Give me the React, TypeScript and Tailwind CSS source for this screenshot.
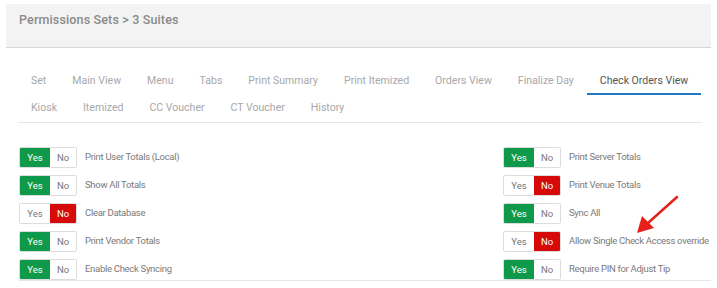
import React from "react";

const row1 = ["Set", "Main View", "Menu", "Tabs", "Print Summary", "Print Itemized", "Orders View", "Finalize Day", "Check Orders View"];
const row2 = ["Kiosk", "Itemized", "CC Voucher", "CT Voucher", "History"];

const left: [string, boolean][] = [
  ["Print User Totals (Local)", true],
  ["Show All Totals", true],
  ["Clear Database", false],
  ["Print Vendor Totals", true],
  ["Enable Check Syncing", true],
];
const right: [string, boolean][] = [
  ["Print Server Totals", true],
  ["Print Venue Totals", false],
  ["Sync All", true],
  ["Allow Single Check Access override", false],
  ["Require PIN for Adjust Tip", true],
];

function Toggle({ yes }: { yes: boolean }) {
  return (
    <div className="flex h-[21px] w-[58px] shrink-0 rounded-[2px] border border-[#dcdcdc] overflow-hidden text-[9.5px] leading-none">
      <div className={"flex w-[30px] items-center justify-center " + (yes ? "bg-[#0e9a4a] text-white" : "bg-white text-[#777]")}>Yes</div>
      <div className={"flex flex-1 items-center justify-center " + (!yes ? "bg-[#d60a0a] text-white" : "bg-white text-[#777]")}>No</div>
    </div>
  );
}

function Row({ label, yes }: { label: string; yes: boolean }) {
  return (
    <div className="flex h-[21px] items-center">
      <Toggle yes={yes} />
      <span className="ml-[8px] text-[9.5px] tracking-[-0.3px] text-[#7a7a7a] whitespace-nowrap">{label}</span>
    </div>
  );
}

function Tab({ label, active }: { label: string; active?: boolean }) {
  return (
    <div
      className={
        "flex h-[27px] items-center pt-[1px] px-[13px] border-b-2 text-[10.55px] whitespace-nowrap " +
        (active ? "border-[#1f78c8] text-[#555]" : "border-transparent text-[#a8a8a8]")
      }
    >
      {label}
    </div>
  );
}

export default function App() {
  return (
    <div className="w-[717px] h-[288px] bg-white overflow-hidden relative" style={{ fontFamily: "Roboto, 'Liberation Sans', sans-serif" }}>
      <div className="mx-[6px] mt-[4px] h-[44px] bg-[#f3f3f3] border-b border-[#d6d6d6] pl-[13px] pt-[7px]">
        <div className="text-[12.5px] font-medium text-[#8a8a8a] tracking-[0.15px]">Permissions Sets &gt; 3 Suites</div>
      </div>
      <div className="ml-[19px] mr-[6px] mt-[20px]">
        <div className="border-b border-[#e6e6e6] -ml-px mr-[9px]">
          <div className="flex">
            {row1.map((t) => (
              <Tab key={t} label={t} active={t === "Check Orders View"} />
            ))}
          </div>
          <div className="flex">
            {row2.map((t) => (
              <Tab key={t} label={t} />
            ))}
          </div>
        </div>
        <div className="mt-[24px] grid grid-cols-[484px_1fr] border-b border-[#e6e6e6]">
          <div className="flex flex-col gap-[7px]">
            {left.map(([l, y]) => (
              <Row key={l} label={l} yes={y} />
            ))}
          </div>
          <div className="flex flex-col gap-[7px]">
            {right.map(([l, y]) => (
              <Row key={l} label={l} yes={y} />
            ))}
          </div>
        </div>
      </div>
      <svg className="absolute left-0 top-0" width="717" height="288" viewBox="0 0 717 288">
        <line x1="677" y1="197" x2="648" y2="223" stroke="#e8201a" strokeWidth="2.5" strokeLinecap="round" />
        <polygon points="637,233 642,216 654,228" fill="#e8201a" />
      </svg>
    </div>
  );
}
